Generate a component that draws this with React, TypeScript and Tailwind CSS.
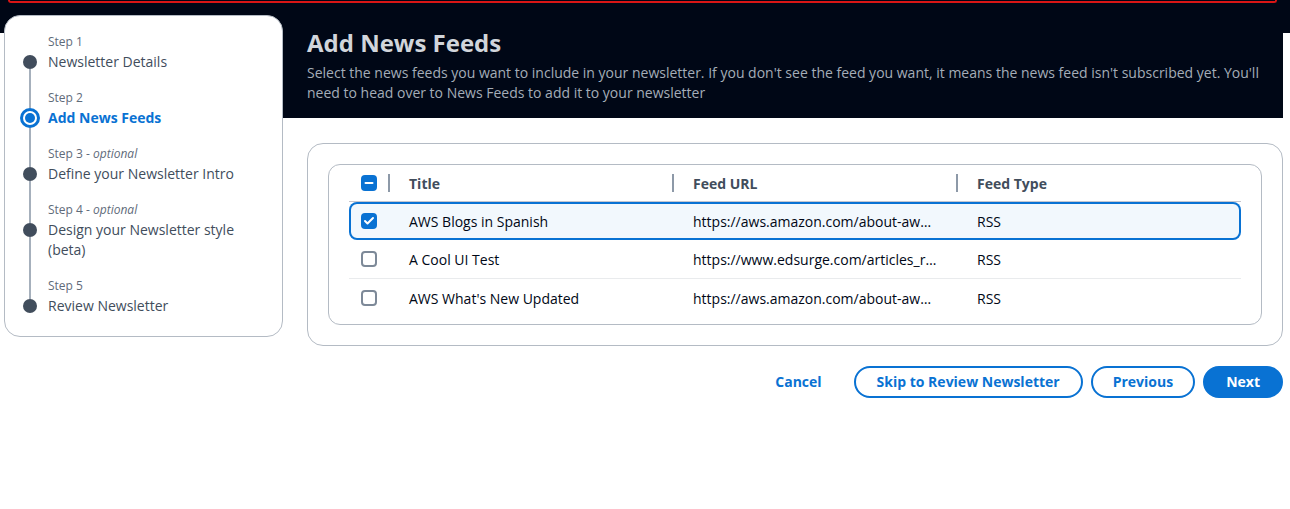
import { Check, Minus } from 'lucide-react'

const steps = [
    { label: 'Step 1', optional: false, title: 'Newsletter Details' },
    { label: 'Step 2', optional: false, title: 'Add News Feeds', active: true },
    { label: 'Step 3', optional: true, title: 'Define your Newsletter Intro' },
    { label: 'Step 4', optional: true, title: 'Design your Newsletter style (beta)' },
    { label: 'Step 5', optional: false, title: 'Review Newsletter' },
]

const feeds = [
    { title: 'AWS Blogs in Spanish', url: 'https://aws.amazon.com/about-aw…', type: 'RSS', selected: true },
    { title: 'A Cool UI Test', url: 'https://www.edsurge.com/articles_r…', type: 'RSS', selected: false },
    { title: "AWS What's New Updated", url: 'https://aws.amazon.com/about-aw…', type: 'RSS', selected: false },
]

function Checkbox({ state }: { state: 'on' | 'off' | 'mixed' }) {
    if (state === 'off') {
        return <span className="block w-[16px] h-[16px] rounded-[4px] border-2 border-[#7d8998] bg-white" />
    }
    return (
        <span className="flex items-center justify-center w-[16px] h-[16px] rounded-[4px] bg-[#0972d3] text-white">
            {state === 'on' ? <Check size={12} strokeWidth={4} /> : <Minus size={12} strokeWidth={4} />}
        </span>
    )
}

function Stepper() {
    return (
        <div className="w-[279px] self-start bg-white border border-[#b4bbc4] rounded-2xl pt-[16px] pb-[20px] pl-[15px] pr-[20px]">
            {steps.map((s, i) => {
                const last = i === steps.length - 1
                return (
                    <div key={s.label} className="flex gap-[8px]">
                        {/* connector column */}
                        <div className="w-[20px] flex flex-col items-center shrink-0">
                            <div className={`w-[2px] ${s.active ? 'h-[20px]' : 'h-[23px]'} ${i === 0 ? '' : 'bg-[#a6b0bc]'}`} />
                            {s.active ? (
                                <span className="flex items-center justify-center w-[20px] h-[20px] rounded-full border-[3px] border-[#0972d3] bg-white">
                                    <span className="w-[10px] h-[10px] rounded-full bg-[#0972d3]" />
                                </span>
                            ) : (
                                <span className="w-[14px] h-[14px] rounded-full bg-[#414d5c]" />
                            )}
                            <div className={`w-[2px] flex-1 ${last ? '' : 'bg-[#a6b0bc]'}`} />
                        </div>
                        <div className={last ? '' : 'pb-[16px]'}>
                            <p className="text-[12px] leading-[20px] text-[#5f6b7a]">
                                {s.label}
                                {s.optional && <> - <i>optional</i></>}
                            </p>
                            <p className={`text-[14px] leading-[20px] ${s.active ? 'font-bold text-[#0972d3]' : 'text-[#414d5c]'}`}>{s.title}</p>
                        </div>
                    </div>
                )
            })}
        </div>
    )
}

export default function App() {
    return (
        <div className="min-h-screen bg-white font-['Open_Sans',sans-serif] text-[#000716]">
            {/* top strip with the bottom edge of a flash bar */}
            <div className="h-[15px] bg-[#000716] pl-[8px] pr-[13px]">
                <div className="h-[3px] border-x-2 border-b-2 border-[#d91515] rounded-b-[6px]" />
            </div>

            <div className="flex pl-[4px] pr-[7px] bg-[linear-gradient(#000716_18px,#ffffff_18px)]">
                <Stepper />

                <div className="flex-1 flex flex-col">
                    {/* dark header */}
                    <div className="bg-[#000716] pl-[24px] pr-[20px] pt-[13px] pb-[15px]">
                        <h1 className="text-[24px] leading-[30px] font-bold text-[#d1d5db]">Add News Feeds</h1>
                        <p className="mt-[5px] text-[14px] leading-[20px] text-[#a4adb8]">
                            Select the news feeds you want to include in your newsletter. If you don't see the feed you want, it means the news feed isn't subscribed yet. You'll need to head over to News Feeds to add it to your newsletter
                        </p>
                    </div>

                    <div className="pl-[24px]">
                        <div className="mt-[25px] border border-[#b4bbc4] rounded-2xl p-[20px]">
                            <div className="border border-[#b4bbc4] rounded-xl px-[20px] pb-[7px]">
                                {/* header */}
                                <div className="grid grid-cols-[39px_284px_284px_1fr] h-[37px] border-b border-[#c6c6cd] items-center text-[14px] font-bold text-[#414d5c]">
                                    <div className="pl-[12px]"><Checkbox state="mixed" /></div>
                                    {['Title', 'Feed URL', 'Feed Type'].map(h => (
                                        <div key={h} className="flex items-center">
                                            <span className="w-[2px] h-[18px] bg-[#8d99a8]" />
                                            <span className="pl-[19px]">{h}</span>
                                        </div>
                                    ))}
                                </div>

                                {/* rows */}
                                {feeds.map((f, i) => (
                                    <div
                                        key={f.title}
                                        className={`grid grid-cols-[39px_284px_284px_1fr] items-center text-[14px] ${
                                            f.selected
                                                ? 'h-[38px] bg-[#f2f8fd] rounded-lg shadow-[inset_0_0_0_2px_#0972d3]'
                                                : i === 1
                                                    ? 'h-[39px] border-b border-[#e9ebed]'
                                                    : 'h-[38px]'
                                        }`}
                                    >
                                        <div className="pl-[12px]"><Checkbox state={f.selected ? 'on' : 'off'} /></div>
                                        <div className="pl-[21px] truncate">{f.title}</div>
                                        <div className="pl-[21px] pr-[4px] truncate">{f.url}</div>
                                        <div className="pl-[21px]">{f.type}</div>
                                    </div>
                                ))}
                            </div>
                        </div>

                        {/* actions */}
                        <div className="flex justify-end gap-[8px] mt-[20px] text-[14px] leading-[20px] font-bold">
                            <button className="px-[22px] py-[4px] border-2 border-transparent text-[#0972d3]">Cancel</button>
                            <button className="px-[21px] py-[4px] border-2 border-[#0972d3] rounded-full text-[#0972d3]">Skip to Review Newsletter</button>
                            <button className="px-[20px] py-[4px] border-2 border-[#0972d3] rounded-full text-[#0972d3]">Previous</button>
                            <button className="px-[21px] py-[4px] border-2 border-[#0972d3] rounded-full bg-[#0972d3] text-white">Next</button>
                        </div>
                    </div>
                </div>
            </div>
        </div>
    )
}
